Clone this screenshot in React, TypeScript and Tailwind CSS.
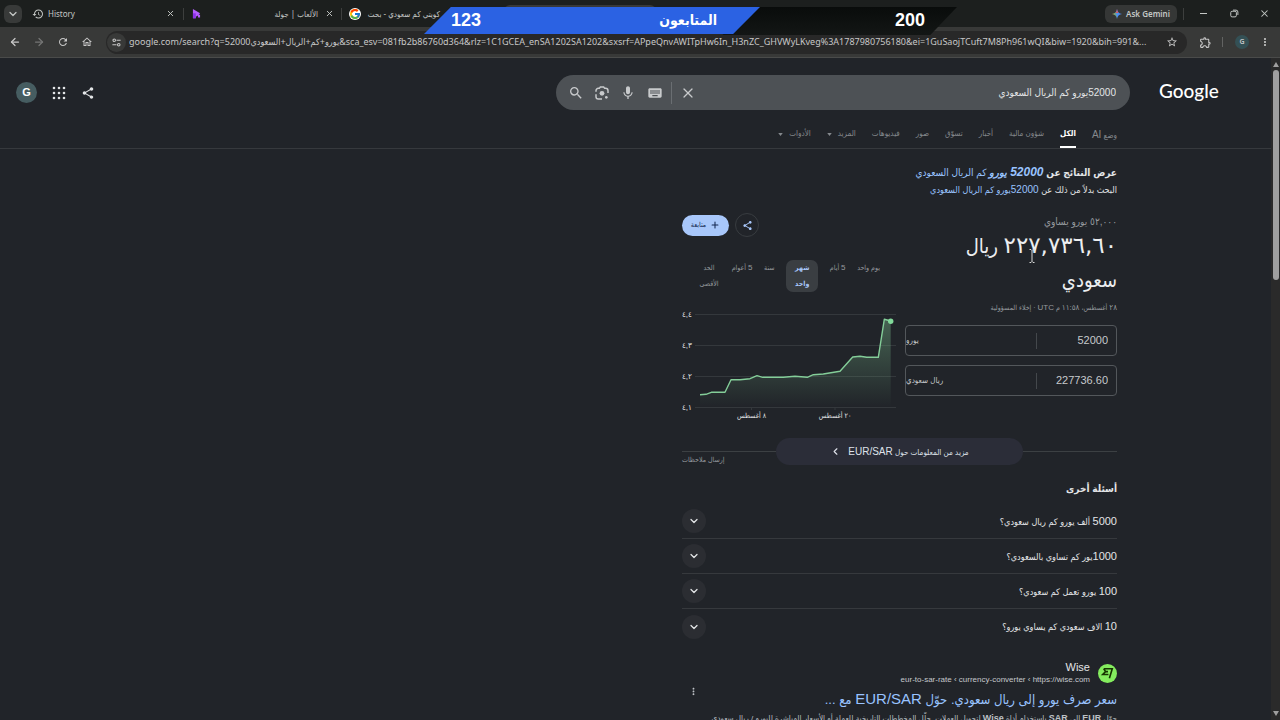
import type { ReactNode } from 'react';
import {
  ArrowLeft,
  ArrowRight,
  ChevronDown,
  ChevronLeft,
  Plus,
  X,
} from 'lucide-react';
import {
  MdHistory,
  MdKeyboard,
  MdMic,
  MdMoreVert,
  MdOutlineExtension,
  MdOutlineHome,
  MdRefresh,
  MdSearch,
  MdShare,
  MdStarBorder,
} from 'react-icons/md';
import { FcGoogle } from 'react-icons/fc';

const pageUrl =
  'google.com/search?q=52000يورو+كم+الريال+السعودي&sca_esv=081fb2b86760d364&rlz=1C1GCEA_enSA1202SA1202&sxsrf=APpeQnvAWITpHw6In_H3nZC_GHVWyLKveg%3A1787980756180&ei=1GuSaojTCuft7M8Ph961wQI&biw=1920&bih=991&...';

const navItems = [
  { label: 'وضع AI' },
  { label: 'الكل', active: true },
  { label: 'شؤون مالية' },
  { label: 'أخبار' },
  { label: 'تسوّق' },
  { label: 'صور' },
  { label: 'فيديوهات' },
  { label: 'المزيد', menu: true },
  { label: 'الأدوات', menu: true },
];

const ranges = [
  { label: 'يوم واحد', width: 'whitespace-nowrap' },
  { label: '5 أيام', width: 'whitespace-nowrap' },
  { label: 'شهر واحد', width: 'w-8 px-1', active: true },
  { label: 'سنة', width: 'whitespace-nowrap' },
  { label: '5 أعوام', width: 'whitespace-nowrap' },
  { label: 'الحد الأقصى', width: 'w-[22px]' },
];

const questions = [
  '5000 ألف يورو كم ريال سعودي؟',
  '1000يور كم تساوي بالسعودي؟',
  '100 يورو تعمل كم سعودي؟',
  '10 الاف سعودي كم يساوي يورو؟',
];

const ratePoints =
  '700,394.7 706,394.3 711.3,392.3 725,392.3 731,379.7 740,379.7 750,378.7 757,375.7 762.7,377.3 783.3,377.3 795,376.3 807.3,377.3 813.3,374.7 823.3,374 840,371.3 852.7,357 860,356.3 866.7,357.3 878.3,357.3 884.3,319.3 890.7,321';

const gridLines = [
  { y: 314, label: '٤,٤' },
  { y: 345, label: '٤,٣' },
  { y: 376, label: '٤,٢' },
  { y: 407, label: '٤,١' },
];

const appDots = [3, 8, 13];

/* Sets Latin words and numbers in their own size inside Arabic text. */
function Mixed({ text, latin }: { text: string; latin: string }) {
  return (
    <>
      {text.split(/([0-9A-Za-z][0-9A-Za-z/]*)/).map((part, index) =>
        index % 2 ? <span key={index} className={latin}>{part}</span> : part,
      )}
    </>
  );
}

function IconButton({ label, className = '', children }: { label: string; className?: string; children: ReactNode }) {
  return (
    <button type="button" aria-label={label} className={`flex shrink-0 items-center justify-center ${className}`}>
      {children}
    </button>
  );
}

function LensIcon() {
  return (
    <svg viewBox="0 0 24 24" className="size-4" fill="none" stroke="currentColor" strokeWidth="2.2">
      <path d="M3 10V8.500A3.500 3.500 0 0 1 6.500 5H8l1.500-2h5L16 5h1.500A3.500 3.500 0 0 1 21 8.500V12M3 14v3.500A3.500 3.500 0 0 0 6.500 21H12" />
      <circle cx="12" cy="12.500" r="3.600" fill="currentColor" stroke="none" />
      <circle cx="18.500" cy="18.500" r="2" fill="currentColor" stroke="none" />
    </svg>
  );
}

function AppsIcon() {
  return (
    <svg viewBox="0 0 16 16" className="size-4" fill="currentColor">
      {appDots.map((y) => appDots.map((x) => <circle key={`${x}-${y}`} cx={x} cy={y} r="1.300" />))}
    </svg>
  );
}

function TabStrip() {
  return (
    <div className="flex h-[27px] items-center bg-[#1c1f1e] text-[#c4c7c5]">
      <IconButton label="Search tabs" className="ml-1 size-[18px] rounded-md bg-[#383a39]">
        <ChevronDown className="size-3" strokeWidth={2.5} />
      </IconButton>
      <div className="ml-[10px] flex w-[152px] items-center gap-1 border-r border-[#3d3f3e] pr-2">
        <MdHistory className="size-3" />
        <span className="flex-1 text-[8px]">History</span>
        <IconButton label="Close History"><X className="size-[9px]" strokeWidth={2.500} /></IconButton>
      </div>
      <div className="flex w-[158px] items-center gap-[7px] border-r border-[#3d3f3e] pr-[7px] pl-2">
        <svg viewBox="0 0 12 14" className="h-[10px] w-[9px]">
          <path d="M1 0 11 6 9 8h2v4H8V9L5 11v2H1z" fill="#b45cff" />
          <path d="M1 6h4v7H1z" fill="#8b32e8" />
        </svg>
        <span dir="rtl" className="flex-1 text-[8px]">الألعاب | جولة</span>
        <IconButton label="Close games tab"><X className="size-[9px]" strokeWidth={2.500} /></IconButton>
      </div>
      <div className="flex w-[154px] items-center gap-1 pl-[7px]">
        <FcGoogle className="size-3 rounded-full bg-white" />
        <span dir="rtl" className="w-[75px] text-[8px] whitespace-nowrap">كويتي كم سعودي - بحث</span>
      </div>
      <div className="mt-[5px] ml-2 h-[22px] w-[152px] self-start rounded-t-md bg-[#383938]" />
      <div className="flex-1" />
      <button type="button" className="flex h-[18px] w-[72px] items-center justify-center gap-1 rounded-md bg-[#353736] text-[8px] font-semibold">
        <svg viewBox="0 0 20 20" className="size-[10px]">
          <defs>
            <linearGradient id="spark" x1="0" y1="0.600" x2="1" y2="0.400">
              <stop offset="0" stopColor="#e8c34a" />
              <stop offset="0.350" stopColor="#6aa58a" />
              <stop offset="0.500" stopColor="#4c8df6" />
              <stop offset="1" stopColor="#4c8df6" />
            </linearGradient>
          </defs>
          <path d="M10 0c1 6 4 9 10 10-6 1-9 4-10 10-1-6-4-9-10-10 6-1 9-4 10-10z" fill="url(#spark)" />
          <path d="M10 0c1 6 2 7 3 8l-6 0c2-2 2.500-4 3-8z" fill="#e5564d" />
        </svg>
        Ask Gemini
      </button>
      <span className="ml-[6px] h-3 w-px bg-[#3d3f3e]" />
      <IconButton label="Minimize" className="ml-[15px] h-3 w-2"><span className="h-px w-[7px] bg-[#c4c7c5]" /></IconButton>
      <IconButton label="Restore" className="ml-[21px] size-3">
        <svg viewBox="0 0 12 12" className="size-[9px]" fill="none" stroke="currentColor" strokeWidth="1.300">
          <rect x="1" y="3" width="7.500" height="7.500" rx="1.800" />
          <path d="M4 1.500h4a2.500 2.500 0 0 1 2.500 2.500v4" />
        </svg>
      </IconButton>
      <IconButton label="Close window" className="mr-[10px] ml-[18px] size-3"><X className="size-[11px]" strokeWidth={2.200} /></IconButton>
    </div>
  );
}

function Toolbar() {
  return (
    <div className="flex h-[31px] items-center border-b border-[#4a4b4a] bg-[#383938] text-[#c7c7c7]">
      <IconButton label="Back" className="ml-[9px] size-3"><ArrowLeft className="size-3" strokeWidth={2.500} /></IconButton>
      <IconButton label="Forward" className="ml-3 size-3 text-[#747574]"><ArrowRight className="size-3" strokeWidth={2.500} /></IconButton>
      <IconButton label="Reload" className="ml-3 size-3"><MdRefresh className="size-3" /></IconButton>
      <IconButton label="Home" className="ml-3 size-3"><MdOutlineHome className="size-3" /></IconButton>
      <div className="mr-3 ml-[13px] flex h-[23px] flex-1 items-center rounded-full bg-[#282828] pr-[9px]">
        <IconButton label="Site information" className="ml-px size-[19px] rounded-full bg-[#383938]">
          <svg viewBox="0 0 12 12" className="size-[9px]" fill="none" stroke="currentColor" strokeWidth="1.400">
            <circle cx="3" cy="3" r="1.700" />
            <path d="M6 3h5.500M.5 9H6" />
            <circle cx="9" cy="9" r="1.700" />
          </svg>
        </IconButton>
        <input
          aria-label="Address and search bar"
          dir="ltr"
          readOnly
          value={pageUrl}
          className="mr-2 ml-[3px] min-w-0 flex-1 bg-transparent text-[9px] outline-none"
        />
        <IconButton label="Bookmark this page"><MdStarBorder className="size-3" /></IconButton>
      </div>
      <IconButton label="Extensions"><MdOutlineExtension className="size-[13px]" /></IconButton>
      <span className="ml-[10px] h-[10px] w-px bg-[#626362]" />
      <IconButton label="Profile" className="ml-3 size-[14px] rounded-full bg-[#345055] text-[7px] font-semibold">G</IconButton>
      <IconButton label="Browser menu" className="mr-[9px] ml-[10px]"><MdMoreVert className="size-3" /></IconButton>
    </div>
  );
}

function FollowerGoal() {
  return (
    <div dir="ltr" className="absolute top-[7px] left-[424px] h-7 w-[533px] text-[18px] leading-[26px] font-bold text-white [font-family:'Liberation_Sans','DejaVu_Sans_Condensed','DejaVu_Sans',sans-serif]">
      <div className="absolute inset-0 bg-linear-to-b from-[#090c0b] to-[#131615] pr-8 text-right [clip-path:polygon(60%_0,100%_0,95%_100%,56%_100%)]">
        200
      </div>
      <div className="absolute top-0 left-0 flex h-[27px] w-[336px] justify-between bg-[#2b62e3] pr-[43px] pl-[27px] [clip-path:polygon(8%_0,100%_0,92%_100%,0_100%)]">
        <span>123</span>
        <span className="text-[14px]">المتابعون</span>
      </div>
    </div>
  );
}

function SearchHeader() {
  return (
    <header className="border-b border-[#36393d]">
      <div className="flex items-center pt-[17px] pr-[52px] pl-4">
        <a href="#home" dir="ltr" className="w-[60px] pb-[3px] text-[19px] leading-6 font-medium whitespace-nowrap text-white [font-family:Lato,sans-serif]">Google</a>
        <form className="mr-[29px] flex h-[35px] w-[574px] items-center rounded-full bg-[#4d5155] pr-[14px] pl-3 text-[#c8cacc]">
          <input
            aria-label="بحث"
            defaultValue="52000يورو كم الريال السعودي"
            className="min-w-0 flex-1 bg-transparent text-[10px] text-[#e3e5e7] outline-none"
          />
          <div dir="ltr" className="flex items-center">
            <IconButton label="بحث" className="size-4"><MdSearch className="size-4" /></IconButton>
            <IconButton label="البحث بالصور" className="ml-[10px] size-4"><LensIcon /></IconButton>
            <IconButton label="البحث الصوتي" className="ml-[10px] size-4"><MdMic className="size-4" /></IconButton>
            <IconButton label="لوحة المفاتيح" className="ml-[11px] size-4"><MdKeyboard className="size-4" /></IconButton>
            <span className="ml-2 h-[22px] w-px bg-[#6a6e72]" />
            <IconButton label="محو" className="ml-2 size-4"><X className="size-4" strokeWidth={1.800} /></IconButton>
          </div>
        </form>
        <div dir="ltr" className="mr-auto flex items-center text-[#e3e5e7]">
          <IconButton label="الحساب" className="size-[21px] rounded-full bg-[#465d61] text-[11px] font-bold text-white">G</IconButton>
          <IconButton label="تطبيقات" className="ml-[14px] size-4"><AppsIcon /></IconButton>
          <IconButton label="مشاركة" className="ml-[13px] size-4"><MdShare className="size-[14px]" /></IconButton>
        </div>
      </div>
      <nav className="flex items-end gap-4 pt-[10px] pr-[154px] text-[8px] text-[#85898d]">
        {navItems.map((item) => (
          <a
            key={item.label}
            href="#results"
            className={`flex h-7 items-center whitespace-nowrap ${item.active ? 'border-b-2 border-white pt-[2px] font-bold text-white' : ''}`}
          >
            <span><Mixed text={item.label} latin="text-[10px]" /></span>
            {item.menu && <svg viewBox="0 0 6 4" className="mr-[6px] h-[3px] w-[5px]"><path d="M0 0h6L3 4z" fill="currentColor" /></svg>}
          </a>
        ))}
      </nav>
    </header>
  );
}

function RateChart() {
  return (
    <svg viewBox="682 307 214 115" className="mt-[15px] h-[115px] w-[214px]" direction="ltr">
      <defs>
        <linearGradient id="area" x1="0" y1="0" x2="0" y2="1">
          <stop offset="0" stopColor="#81c995" stopOpacity="0.380" />
          <stop offset="1" stopColor="#81c995" stopOpacity="0" />
        </linearGradient>
      </defs>
      {gridLines.map((line) => (
        <g key={line.y}>
          <path d={`M695 ${line.y + 0.5}H896`} stroke="#34383c" />
          <text x="682" y={line.y + 3} fontSize="8" fill="#e3e5e7">{line.label}</text>
        </g>
      ))}
      <polygon points={`700,407 ${ratePoints} 890.7,407`} fill="url(#area)" />
      <polyline points={ratePoints} fill="none" stroke="#84ce99" strokeWidth="1.400" strokeLinejoin="round" />
      <circle cx="890.700" cy="321.300" r="2.700" fill="#81d99a" />
      <path d="M751.500 407v3M835 407v3" stroke="#34383c" />
      <text x="751.500" y="418" fontSize="7" textAnchor="middle" direction="rtl" fill="#e3e5e7">٨ أغسطس</text>
      <text x="835" y="418" fontSize="7" textAnchor="middle" direction="rtl" fill="#e3e5e7">٢٠ أغسطس</text>
    </svg>
  );
}

function AmountField({ id, amount, currency }: { id: string; amount: string; currency: string }) {
  return (
    <div className="flex h-[31px] items-center rounded-[4px] border border-[#53575b] text-[#c6c9cc]">
      <input
        id={id}
        aria-label={`المبلغ ${currency}`}
        dir="ltr"
        defaultValue={amount}
        className="w-[79px] bg-transparent pr-2 text-right text-[11px] outline-none"
      />
      <span className="h-4 w-px bg-[#44484c]" />
      <select aria-label={`العملة ${currency}`} className="min-w-0 flex-1 appearance-none bg-transparent text-left text-[8px] outline-none [text-align-last:left]">
        <option>{currency}</option>
      </select>
    </div>
  );
}

function CurrencyCard() {
  return (
    <section className="mt-[15px] flex items-start justify-between">
      <div className="w-[212px]">
        <p className="mt-[3px] text-[10px] leading-3 text-[#969a9e]">٥٢,٠٠٠ يورو يساوي</p>
        <p className="text-[20px] leading-[34px] text-[#eceef0]">
          <span className="text-[23px] [font-family:'DejaVu_Sans',sans-serif]">٢٢٧,٧٣٦,٦٠</span> ريال<br />سعودي
        </p>
        <p className="mt-[5px] mb-[11px] text-[7px] leading-3 whitespace-nowrap text-[#969a9e]">
          <span className="text-[8px]">٢٨</span> أغسطس، <span className="text-[8px]">١١:٥٨</span> م <span className="text-[8px]">UTC</span> · <a href="#disclaimer">إخلاء المسؤولية</a>
        </p>
        <div className="flex flex-col gap-[9px]">
          <AmountField id="from" amount="52000" currency="يورو" />
          <AmountField id="to" amount="227736.60" currency="ريال سعودي" />
        </div>
      </div>
      <div className="w-[214px]">
        <div className="flex items-center justify-end gap-[6px]">
          <IconButton label="مشاركة" className="size-6 rounded-full border border-[#383c40] text-[#a8c7fa]"><MdShare className="size-[11px]" /></IconButton>
          <button type="button" className="flex h-[21px] w-[47px] items-center justify-center gap-1 rounded-full bg-[#a8c7fa] text-[7px] text-[#142850]">
            <Plus className="size-[10px]" strokeWidth={2.500} />
            متابعة
          </button>
        </div>
        <div className="mt-[23px] flex items-start justify-between pr-4 pl-4 text-[7px] leading-4 text-[#969a9e]">
          {ranges.map((range) => (
            <button
              type="button"
              key={range.label}
              className={`text-center ${range.width} ${range.active ? 'rounded-[7px] bg-[#3a3e42] font-bold text-[#a8c7fa]' : ''}`}
            >
              <Mixed text={range.label} latin="text-[8px]" />
            </button>
          ))}
        </div>
        <RateChart />
      </div>
    </section>
  );
}

function Results() {
  return (
    <main className="mr-[154px] w-[435px]">
      <p className="mt-[14px] text-[10px] leading-[18px] font-bold whitespace-nowrap text-[#e3e5e7]">
        عرض النتائج عن{' '}
        <a href="#corrected" className="font-normal text-[#99c3ff]"><b><i><Mixed text="52000 يورو" latin="text-[12px]" /></i></b> كم الريال السعودي</a>
      </p>
      <p className="text-[9px] leading-4 whitespace-nowrap text-[#e3e5e7]">
        البحث بدلاً من ذلك عن{' '}
        <a href="#original" className="text-[#99c3ff]"><Mixed text="52000يورو كم الريال السعودي" latin="text-[10px]" /></a>
      </p>
      <CurrencyCard />
      <div className="mt-4 flex items-center">
        <span className="h-px flex-1 bg-[#3c4043]" />
        <a href="#more" className="flex h-[27px] w-[247px] items-center justify-center gap-[7px] rounded-full bg-[#2b2d38] text-[8px] text-[#dfe2ea]">
          <span><Mixed text="مزيد من المعلومات حول EUR/SAR" latin="text-[10px]" /></span>
          <ChevronLeft className="size-[11px]" strokeWidth={2.500} />
        </a>
        <span className="h-px flex-1 bg-[#3c4043]" />
      </div>
      <div className="-mt-[13px] flex justify-end text-[7px] leading-4 text-[#969a9e]">
        <a href="#feedback">إرسال ملاحظات</a>
      </div>
      <h2 className="mt-[13px] text-[10px] leading-4 font-bold text-[#e3e5e7]">أسئلة أخرى</h2>
      <ul className="mt-[7px]">
        {questions.map((question) => (
          <li key={question} className="flex h-[35px] items-center justify-between border-b border-[#36393d] text-[9px] text-[#e3e5e7] last:border-0">
            <span><Mixed text={question} latin="text-[11px]" /></span>
            <IconButton label={question} className="size-6 rounded-full bg-[#2b2d32]"><ChevronDown className="size-3" strokeWidth={2.500} /></IconButton>
          </li>
        ))}
      </ul>
      <article className="mt-[14px]">
        <div className="flex items-center">
          <svg viewBox="0 0 20 20" className="ml-2 size-[19px]">
            <circle cx="10" cy="10" r="10" fill="#84ec5e" />
            <path d="M6 5h9l-3 10M6 5l2 3-3 3h6M7.500 8h3" fill="none" stroke="#163300" strokeWidth="1.700" />
          </svg>
          <div>
            <p className="text-[11px] leading-[13px] text-[#e3e5e7]">Wise</p>
            <p dir="ltr" className="text-[8px] leading-3 whitespace-nowrap text-[#c5c8cb]">eur-to-sar-rate ‹ currency-converter ‹ https://wise.com</p>
          </div>
          <IconButton label="حول هذه النتيجة" className="mt-7 mr-auto ml-[6px] -mb-2 text-[#bdc1c6]"><MdMoreVert className="size-[11px]" /></IconButton>
        </div>
        <h3 className="text-[13px] leading-5 whitespace-nowrap">
          <a href="#wise" className="text-[#99c3ff]"><Mixed text="سعر صرف يورو إلى ريال سعودي. حوّل EUR/SAR مع ..." latin="text-[15px]" /></a>
        </h3>
        <p className="text-[8px] leading-4 whitespace-nowrap text-[#bdc1c6]">
          <Mixed text="حوّل EUR إلى SAR باستخدام أداة Wise لتحويل العملات. حلّل المخططات التاريخية للعملة أو الأسعار المباشرة لليورو / ريال سعودي" latin="text-[9px] font-bold" />
        </p>
      </article>
    </main>
  );
}

export default function App() {
  return (
    <div className="relative flex h-screen flex-col overflow-hidden bg-[#212429] [font-family:'Liberation_Sans','DejaVu_Sans_Condensed','DejaVu_Sans',sans-serif]">
      <div className="[font-family:'Noto_Sans','DejaVu_Sans_Condensed','DejaVu_Sans',sans-serif]">
        <TabStrip />
        <Toolbar />
      </div>
      <FollowerGoal />
      <div className="flex min-h-0 flex-1">
        <div dir="rtl" className="min-w-0 flex-1 overflow-hidden">
          <SearchHeader />
          <Results />
        </div>
        <div className="flex w-[9px] flex-col items-center bg-[#2a2a2a] pt-1">
          <svg viewBox="0 0 6 5" className="h-[5px] w-[6px]"><path d="M3 0 6 5H0z" fill="#9f9f9f" /></svg>
          <div className="mt-[3px] h-[210px] w-[6px] rounded-full bg-[#9f9f9f]" />
          <svg viewBox="0 0 6 5" className="mt-auto mb-1 h-[5px] w-[6px]"><path d="M0 0h6L3 5z" fill="#9f9f9f" /></svg>
        </div>
      </div>
      <svg viewBox="0 0 8 14" className="pointer-events-none absolute top-[249px] left-[1028px] h-[14px] w-2" fill="none" stroke="#d8d8d8">
        <path d="M1.500.5H3l1 1 1-1h1.500M4 1.500v11M1.500 13.500H3l1-1 1 1h1.500" />
      </svg>
    </div>
  );
}
